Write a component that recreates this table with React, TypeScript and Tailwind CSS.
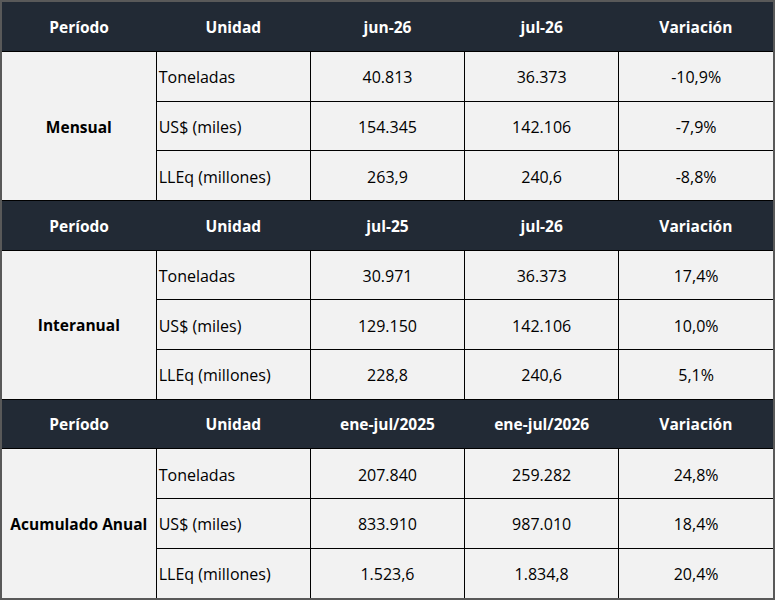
import React from 'react';

type Section = {
  periodo: string;
  cols: [string, string];
  rows: [string, string, string, string][];
};

const SECTIONS: Section[] = [
  {
    periodo: 'Mensual',
    cols: ['jun-26', 'jul-26'],
    rows: [
      ['Toneladas', '40.813', '36.373', '-10,9%'],
      ['US$ (miles)', '154.345', '142.106', '-7,9%'],
      ['LLEq (millones)', '263,9', '240,6', '-8,8%'],
    ],
  },
  {
    periodo: 'Interanual',
    cols: ['jul-25', 'jul-26'],
    rows: [
      ['Toneladas', '30.971', '36.373', '17,4%'],
      ['US$ (miles)', '129.150', '142.106', '10,0%'],
      ['LLEq (millones)', '228,8', '240,6', '5,1%'],
    ],
  },
  {
    periodo: 'Acumulado Anual',
    cols: ['ene-jul/2025', 'ene-jul/2026'],
    rows: [
      ['Toneladas', '207.840', '259.282', '24,8%'],
      ['US$ (miles)', '833.910', '987.010', '18,4%'],
      ['LLEq (millones)', '1.523,6', '1.834,8', '20,4%'],
    ],
  },
];

const th = 'p-0 pt-[2px] text-center text-[15.5px] font-bold text-white';
const td = 'border border-black p-0 pt-[2px] text-center';

export default function App() {
  return (
    <div className="h-[600px] w-[775px] border-2 border-[#595959] bg-white font-['Open_Sans',sans-serif] text-[16px] text-black">
      <table className="h-full w-full table-fixed border-collapse border-hidden">
        <tbody>
          {SECTIONS.map((s) => (
            <React.Fragment key={s.periodo}>
              <tr className="h-[48px] bg-[#222a35]">
                <th className={th}>Período</th>
                <th className={th}>Unidad</th>
                <th className={th}>{s.cols[0]}</th>
                <th className={th}>{s.cols[1]}</th>
                <th className={th}>Variación</th>
              </tr>
              {s.rows.map((r, i) => (
                <tr key={r[0]} className="h-[48px] bg-[#f2f2f2]">
                  {i === 0 && (
                    <td rowSpan={3} className="border border-black p-0 pt-[2px] text-center text-[15.5px] font-bold">
                      {s.periodo}
                    </td>
                  )}
                  <td className="border border-black py-0 pt-[2px] pl-[2px] text-left">{r[0]}</td>
                  <td className={td}>{r[1]}</td>
                  <td className={td}>{r[2]}</td>
                  <td className={td}>{r[3]}</td>
                </tr>
              ))}
            </React.Fragment>
          ))}
        </tbody>
      </table>
    </div>
  );
}
